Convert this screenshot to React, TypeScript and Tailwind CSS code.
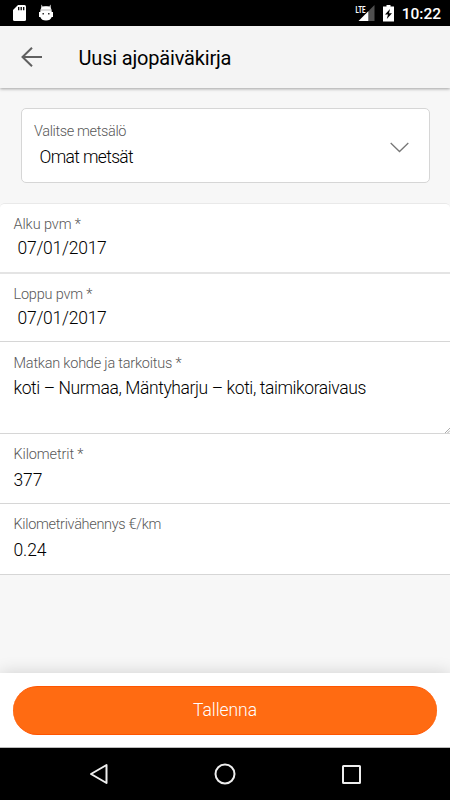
import React from "react";

const body = "font-['Roboto','Open_Sans',sans-serif] font-light";

function Field({
  label,
  value,
  labelClass = "",
  valueClass = "",
  className = "",
  children,
}: {
  label: string;
  value: string;
  labelClass?: string;
  valueClass?: string;
  className?: string;
  children?: React.ReactNode;
}) {
  return (
    <div className={`${body} relative shrink-0 whitespace-nowrap bg-white px-[13.5px] ${className}`}>
      <div className={`text-[14.5px] leading-5 text-[#585858] ${labelClass}`}>{label}</div>
      <div className={`text-[17.5px] leading-6 text-black ${valueClass}`}>{value}</div>
      {children}
    </div>
  );
}

function StatusBar() {
  return (
    <div className="flex h-[26px] shrink-0 items-center bg-black pl-[13px] pr-[9px] text-white">
      <svg width="13" height="16" viewBox="0 0 13 16">
        <path fill="#fff" d="M5 0h6.5Q13 0 13 1.5v13q0 1.500-1.500 1.500h-10Q0 16 0 14.500V5z" />
        <path stroke="#000" strokeWidth="1.300" d="M5.700 2v3.200M8.200 2v3.200M10.700 2v3.200" />
      </svg>
      <svg className="-mt-0.5 ml-[13px]" width="14" height="17" viewBox="0 0 14 17">
        <path fill="#bbb" d="M2.200 .5l1.800 2h6l1.800-2 .2 4H2z" />
        <path fill="#fff" d="M1.300 7Q1.300 2.200 7 2.200T12.700 7v1H14v5h-1.300Q11.500 16.500 7 16.500T1.300 13H0V8h1.300z" />
        <path fill="#bbb" d="M2 5.500h10v1H2z" />
        <path fill="#222" d="M3.500 9h1.400v1.400H3.500zM9.100 9h1.400v1.400H9.100z" />
      </svg>
      <svg className="ml-auto" width="20" height="17" viewBox="0 0 20 17">
        <path fill="#505050" d="M14 5.500L19.500 0v16H14z" />
        <path fill="#fff" d="M3.500 16L13.500 6v10z" />
        <text x="0.500" y="8" textLength="10" lengthAdjust="spacingAndGlyphs" fill="#fff" stroke="#000" strokeWidth="1.500" paintOrder="stroke" className="font-['Roboto',sans-serif] text-[9.500px] font-bold">LTE</text>
      </svg>
      <svg className="ml-2" width="11" height="17" viewBox="0 0 11 17">
        <path fill="#fff" d="M3.500 0h4v1.500H11V16.500H0V1.500h3.500z" />
        <path fill="#000" d="M7 4L2 9.500h3L3.800 14 9 8.200H6z" />
      </svg>
      <div className="ml-2 pt-px font-['Roboto',sans-serif] text-[15.500px] font-medium leading-5">10:22</div>
    </div>
  );
}

export default function App() {
  return (
    <div className="flex h-[800px] w-[450px] flex-col overflow-hidden bg-[#f7f7f7]">
      <StatusBar />
      <header className="z-10 flex h-[62px] shrink-0 items-center bg-[#f4f4f4] pl-[20.5px] shadow-[0_1px_3px_rgba(0,0,0,0.35)]">
        <svg width="21" height="20" viewBox="0 0 21 20" fill="none" stroke="#606060" strokeWidth="2">
          <path d="M21 10H1.500M11 .7L1.500 10l9.500 9.300" />
        </svg>
        <h1 className="ml-[37px] pt-0.5 font-['Roboto',sans-serif] text-[20px] leading-6 tracking-[-0.18px] text-black">Uusi ajopäiväkirja</h1>
      </header>

      <main className="flex min-h-0 flex-1 flex-col">
        <div className={`${body} mx-[21px] mt-[20px] flex h-[75px] w-[409px] shrink-0 items-center rounded-[5px] border border-[#d6d6d6] bg-white pl-3 pr-5`}>
          <div className="flex-1">
            <div className="text-[14.5px] leading-5 tracking-[-0.36px] text-[#585858]">Valitse metsälö</div>
            <div className="mt-[3px] pl-[5.5px] text-[17.5px] leading-6 tracking-[-0.65px] text-black">Omat metsät</div>
          </div>
          <svg className="mt-[3px]" width="19" height="11" viewBox="0 0 19 11" fill="none" stroke="#777" strokeWidth="1.300">
            <path d="M.7 1l8.800 8.500L18.300 1" />
          </svg>
        </div>

        <section className="mt-5 shrink-0 overflow-hidden rounded-t-[5px] border-t border-[#e9e9e9]">
          <Field className="h-[70px] border-b-2 border-[#e4e4e4] pt-[11px]" label="Alku pvm *" value="07/01/2017" labelClass="tracking-[-0.1px]" valueClass="mt-px pl-1 tracking-[-0.25px]" />
          <Field className="h-[68px] border-b border-[#d6d6d6] pt-[11px]" label="Loppu pvm *" value="07/01/2017" labelClass="tracking-[-0.2px]" valueClass="mt-px pl-1 tracking-[-0.25px]" />
          <Field className="h-[92px] border-b border-[#d6d6d6] pt-[12px]" label="Matkan kohde ja tarkoitus *" value="koti – Nurmaa, Mäntyharju – koti, taimikoraivaus" labelClass="tracking-[-0.22px]" valueClass="mt-[2px] tracking-[-0.4px]">
            <svg className="absolute bottom-0 right-0" width="5" height="5" viewBox="0 0 5 5" stroke="#888" strokeWidth=".7">
              <path d="M0 5l5-5M2.500 5L5 2.500" />
            </svg>
          </Field>
          <Field className="h-[70px] border-b border-[#d6d6d6] pt-[11px]" label="Kilometrit *" value="377" labelClass="tracking-[-0.12px]" valueClass="mt-[3px] tracking-[-0.1px]" />
          <Field className="h-[71px] border-b border-[#d6d6d6] pt-[11px]" label="Kilometrivähennys €/km" value="0.24" labelClass="tracking-[-0.32px]" valueClass="mt-[3px] tracking-[-0.1px]" />
        </section>
      </main>

      <footer className="flex h-[75px] shrink-0 items-start border-b border-[#bbb] bg-white px-[13px] pt-[13px] shadow-[0_0_16px_rgba(0,0,0,0.16)]">
        <button className={`${body} h-[49px] w-[425px] rounded-full border-y border-[#ff5500] bg-[#ff6b12] text-[17.5px] tracking-[-0.05px] text-white`}>Tallenna</button>
      </footer>
      <nav className="z-10 flex h-[52px] shrink-0 items-center bg-black pl-[89px] text-[#eee]">
        <svg width="20" height="22" viewBox="0 0 20 22" fill="none" stroke="currentColor" strokeWidth="2" strokeLinejoin="round">
          <path d="M17.500 2v18L2 11z" />
        </svg>
        <svg className="ml-[105px]" width="22" height="22" viewBox="0 0 22 22" fill="none" stroke="currentColor" strokeWidth="2">
          <circle cx="11" cy="11" r="9.500" />
        </svg>
        <svg className="ml-[106px]" width="19" height="19" viewBox="0 0 19 19" fill="none" stroke="currentColor" strokeWidth="2">
          <rect x="1" y="1" width="17" height="17" rx=".5" />
        </svg>
      </nav>
    </div>
  );
}
